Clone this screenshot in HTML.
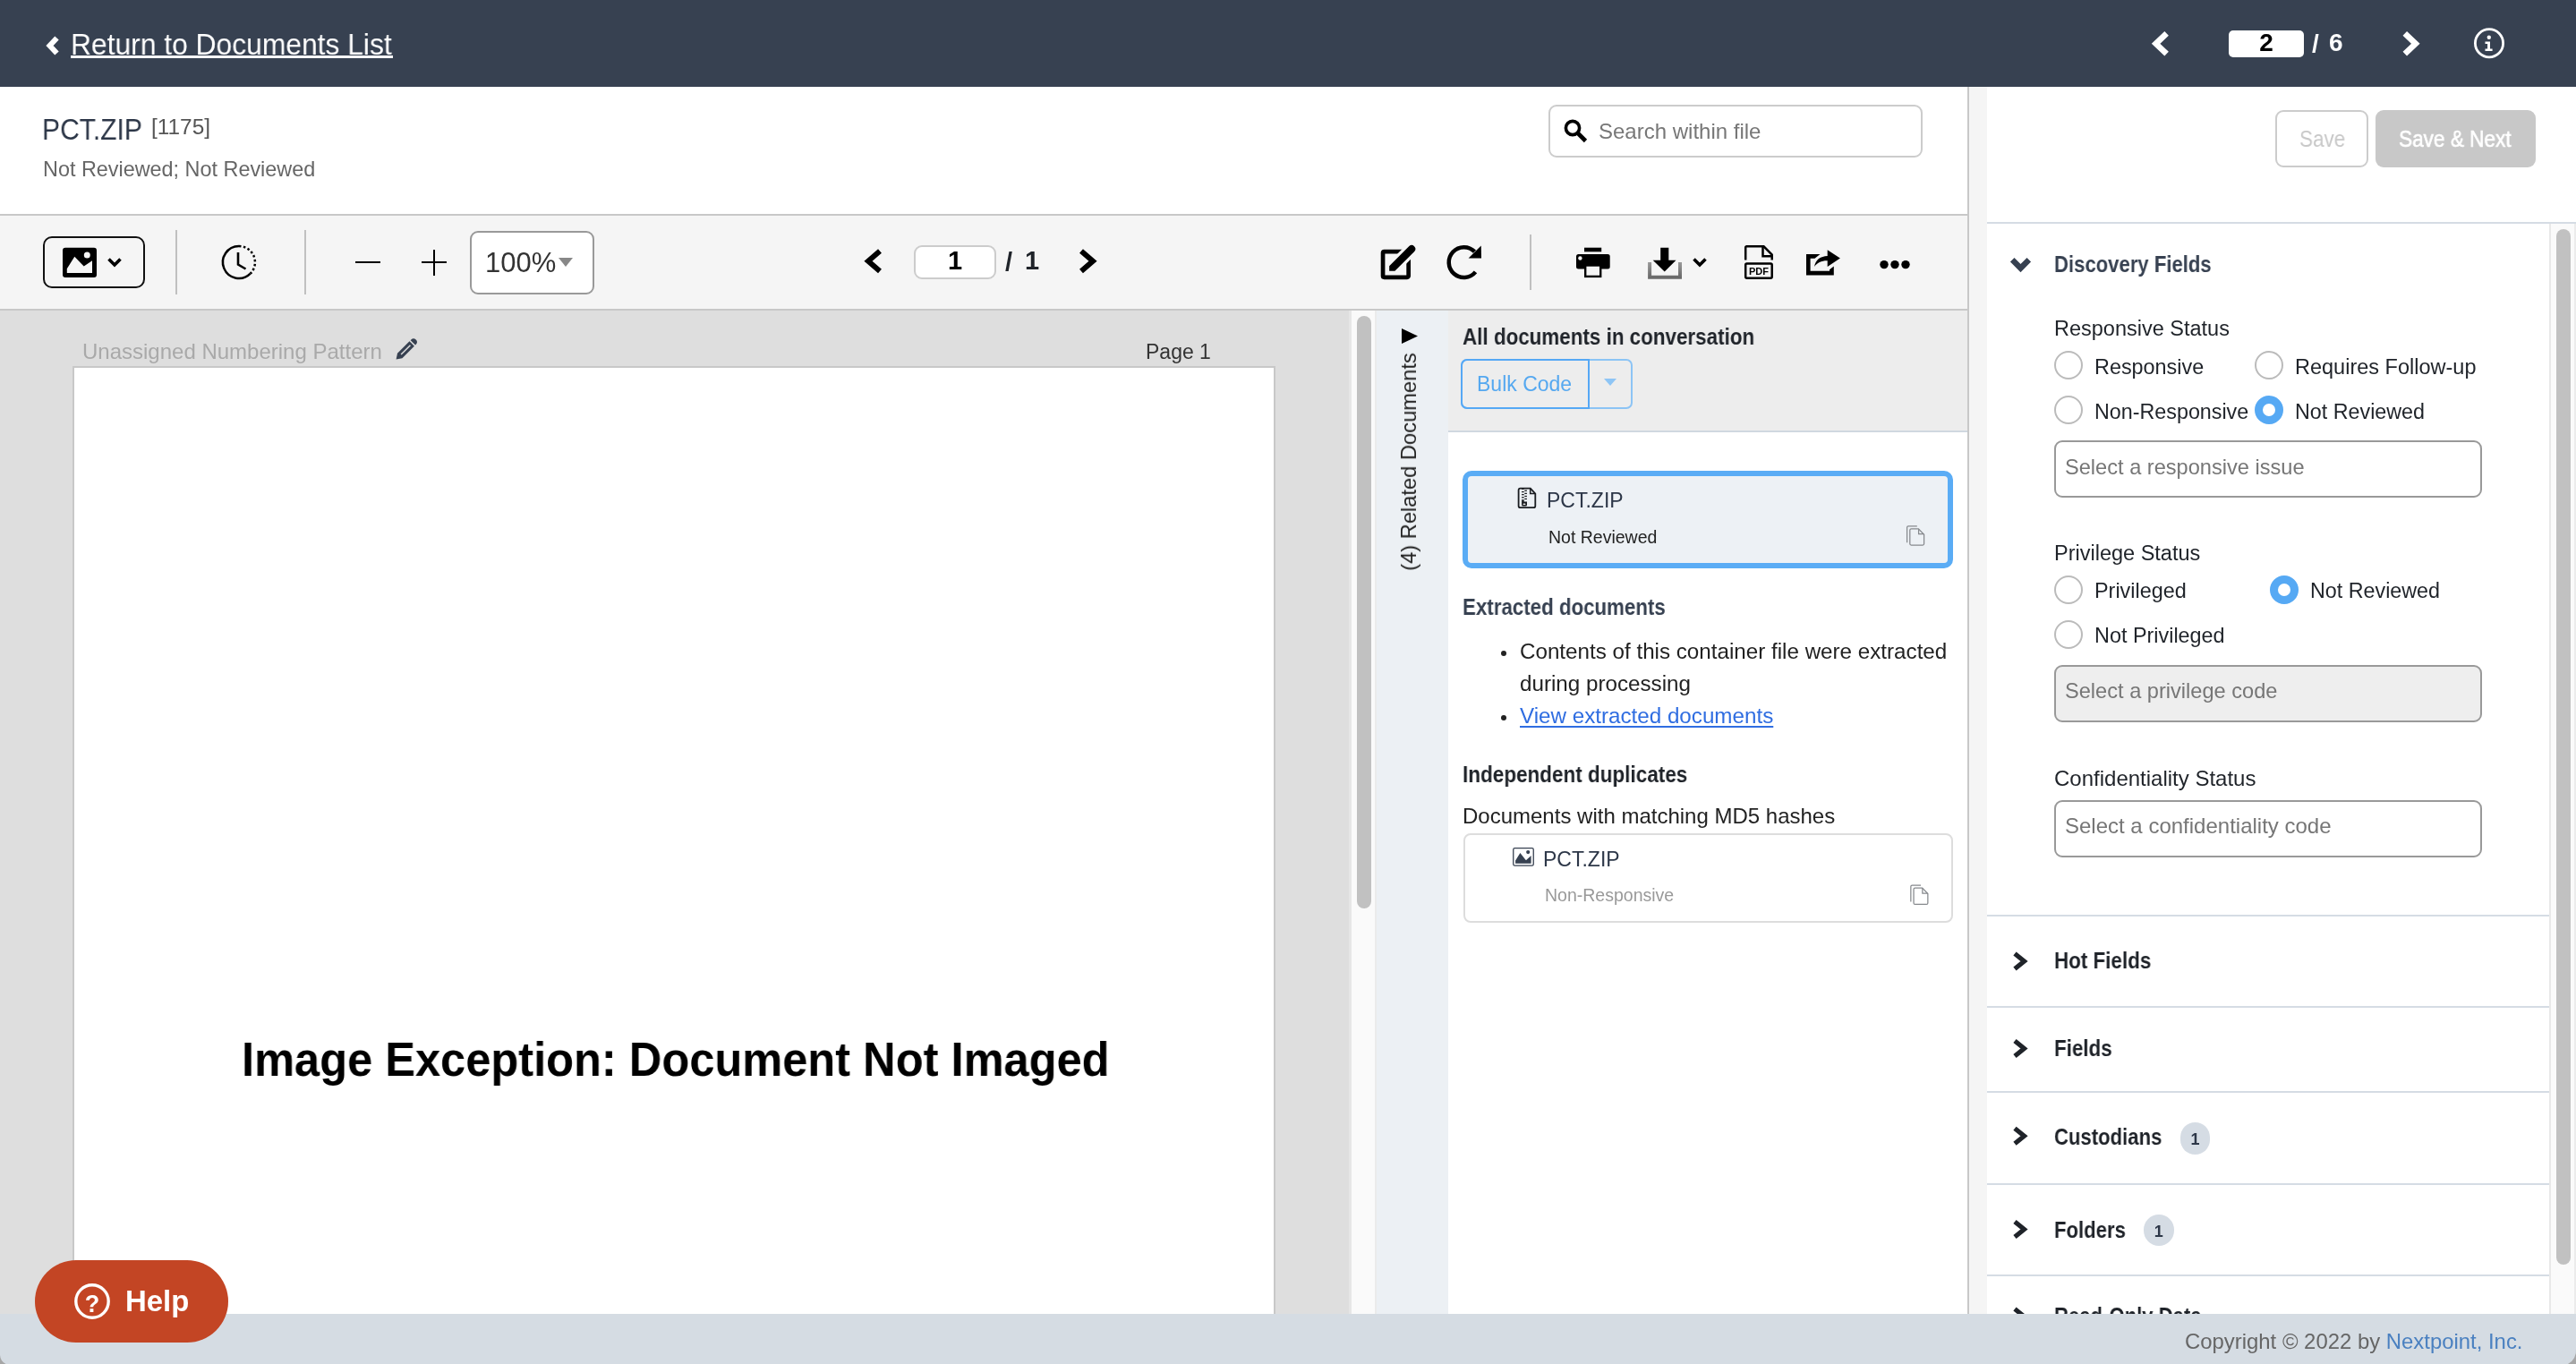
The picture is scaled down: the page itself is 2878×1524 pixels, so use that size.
<!DOCTYPE html>
<html><head><meta charset="utf-8">
<style>
*{margin:0;padding:0;box-sizing:border-box}
html,body{width:2878px;height:1524px;overflow:hidden;background:#fff;font-family:"Liberation Sans",sans-serif}
.a{position:absolute}
.t{position:absolute;line-height:1;margin-top:-0.847em;white-space:nowrap;will-change:transform}
.b{font-weight:bold}
svg{position:absolute;overflow:visible}
</style></head><body>

<!-- ===== top header ===== -->
<div class="a" style="left:0;top:0;width:2878px;height:97px;background:#374151"></div>
<svg style="left:0;top:0" width="1" height="1"><polyline points="63.5,42.5 55.5,51 63.5,59.5" fill="none" stroke="#fff" stroke-width="6"/></svg>
<div class="t" style="left:78.5px;top:60.5px;font-size:34px;color:#fff;transform:scaleX(0.935);transform-origin:0 0">Return to Documents List</div><div class="a" style="left:78.5px;top:61.6px;width:360px;height:3px;background:#fff"></div>
<svg style="left:0;top:0" width="1" height="1"><polyline points="2420.6,37.4 2408.6,48.8 2420.6,60.2" fill="none" stroke="#fff" stroke-width="6.6"/></svg>
<div class="a" style="left:2490px;top:34px;width:84px;height:30px;background:#fff;border-radius:5px"></div>
<div class="t b" style="left:2490px;width:84px;text-align:center;top:57.9px;font-size:28px;color:#000">2</div>
<div class="t b" style="left:2583px;top:58.5px;font-size:28px;color:#fff">/</div><div class="t b" style="left:2601.5px;top:57.9px;font-size:28px;color:#fff">6</div>
<svg style="left:0;top:0" width="1" height="1"><polyline points="2686.8,37.4 2698.8,48.8 2686.8,60.2" fill="none" stroke="#fff" stroke-width="6.6"/></svg>
<svg style="left:0;top:0" width="1" height="1"><circle cx="2781" cy="48.2" r="15.6" fill="none" stroke="#fff" stroke-width="2.8"/><circle cx="2780.8" cy="41.8" r="2.2" fill="#fff"/><path d="M2776.5 46.5h5.5v8h2.6v2.6h-8.1v-2.6h2.6v-5.4h-2.6z" fill="#fff"/></svg>

<!-- ===== doc title area ===== -->
<div class="t" style="left:47px;top:156.5px;font-size:33.2px;color:#2d3748;transform:scaleX(0.905);transform-origin:0 0">PCT.ZIP</div>
<div class="t" style="left:169px;top:150.5px;font-size:24.4px;color:#555">[1175]</div>
<div class="t" style="left:48px;top:198px;font-size:23.4px;color:#666">Not Reviewed; Not Reviewed</div>
<div class="a" style="left:1730px;top:117px;width:418px;height:59px;border:2px solid #ccc;border-radius:9px;background:#fff"></div>
<svg style="left:0;top:0" width="1" height="1"><circle cx="1757" cy="143" r="7.6" fill="none" stroke="#000" stroke-width="3.6"/><line x1="1762.5" y1="148.5" x2="1771.5" y2="157.5" stroke="#000" stroke-width="4.6"/></svg>
<div class="t" style="left:1786px;top:155px;font-size:24px;color:#777">Search within file</div>

<!-- divider between left and right panels -->
<div class="a" style="left:2198px;top:97px;width:2px;height:1371px;background:#c8c8c8"></div>
<div class="a" style="left:2200px;top:97px;width:20px;height:1371px;background:#f5f5f5"></div>

<!-- ===== toolbar ===== -->
<div class="a" style="left:0;top:239px;width:2198px;height:108px;background:#f5f5f5;border-top:2px solid #c8c8c8;border-bottom:2px solid #c8c8c8"></div>
<div class="a" style="left:48px;top:264px;width:114px;height:58px;border:2px solid #111;border-radius:10px"></div>
<svg style="left:0;top:0" width="1" height="1">
 <rect x="70" y="276.7" width="38" height="33.3" rx="3" fill="#000"/>
 <path d="M74.8 305V300.3L83.3 286.7L93.7 297.5L103 291.3V305Z" fill="#f5f5f5"/>
 <circle cx="97.3" cy="285" r="3.5" fill="#f5f5f5"/>
 <polyline points="121.5,289.5 128,296 134.5,289.5" fill="none" stroke="#000" stroke-width="3.6"/>
</svg>
<div class="a" style="left:196px;top:257px;width:2px;height:72px;background:#c0c0c0"></div>
<svg style="left:0;top:0" width="1" height="1">
 <path d="M267 275A18 18 0 1 0 279.7 305.7" fill="none" stroke="#000" stroke-width="2.5"/>
 <path d="M267 275A18 18 0 0 1 279.7 305.7" fill="none" stroke="#000" stroke-width="2.5" stroke-dasharray="2.5 2.5"/>
 <polyline points="266,282 266,295.5 274.5,300.5" fill="none" stroke="#000" stroke-width="2.6"/>
</svg>
<div class="a" style="left:340px;top:257px;width:2px;height:72px;background:#c0c0c0"></div>
<div class="a" style="left:397px;top:291.7px;width:28px;height:2.6px;background:#000"></div>
<div class="a" style="left:471px;top:291.7px;width:28px;height:2.6px;background:#000"></div>
<div class="a" style="left:483.7px;top:279px;width:2.6px;height:28.7px;background:#000"></div>
<div class="a" style="left:524.5px;top:257.5px;width:139px;height:71px;border:2px solid #999;border-radius:9px;background:#fff"></div>
<div class="t" style="left:542px;top:304px;font-size:31px;color:#333">100%</div>
<svg style="left:0;top:0" width="1" height="1"><path d="M624 288H640L632 298Z" fill="#888"/></svg>

<svg style="left:0;top:0" width="1" height="1"><polyline points="983,280.5 970,291.7 983,303" fill="none" stroke="#000" stroke-width="6"/></svg>
<div class="a" style="left:1021px;top:274px;width:92px;height:38px;border:2px solid #ccc;border-radius:9px;background:#fff"></div>
<div class="t b" style="left:1021px;width:92px;text-align:center;top:302px;font-size:29px;color:#000">1</div>
<div class="t b" style="left:1122.5px;top:303.5px;font-size:29px;color:#1f2329">/</div><div class="t b" style="left:1144.5px;top:302px;font-size:29px;color:#1f2329">1</div>
<svg style="left:0;top:0" width="1" height="1"><polyline points="1208,280.5 1221,291.7 1208,303" fill="none" stroke="#000" stroke-width="6"/></svg>

<!-- right toolbar icons -->
<svg style="left:0;top:0" width="1" height="1">
 <path d="M1568 281.05H1546.55a1.5 1.5 0 0 0-1.5 1.5V308.35a1.5 1.5 0 0 0 1.5 1.5H1572.15a1.5 1.5 0 0 0 1.5-1.5V287" fill="none" stroke="#000" stroke-width="4.7"/>
 <path d="M1552.15 302.8V297.3L1574.37 275.07A4.15 4.15 0 0 1 1580.23 280.93L1558.4 302.8Z" fill="#000" stroke="#f5f5f5" stroke-width="6.6" paint-order="stroke"/>
</svg>
<svg style="left:0;top:0" width="1" height="1">
 <path d="M1647.5 281.2A16.85 16.85 0 1 0 1648.5 303.9" fill="none" stroke="#000" stroke-width="4.5"/>
 <path d="M1654.75 274.5L1655 288.6H1640.6Z" fill="#000"/>
</svg>
<div class="a" style="left:1709px;top:262px;width:2px;height:62px;background:#c0c0c0"></div>
<svg style="left:0;top:0" width="1" height="1">
 <rect x="1770" y="276.7" width="19.2" height="4.6" fill="#000"/>
 <rect x="1761" y="284" width="37.7" height="16.6" rx="2.5" fill="#000"/>
 <circle cx="1765.4" cy="288.5" r="2.2" fill="#f5f5f5"/>
 <rect x="1771.2" y="296.5" width="17" height="12.4" fill="#f5f5f5" stroke="#000" stroke-width="2.4"/>
</svg>
<svg style="left:0;top:0" width="1" height="1">
 <defs><linearGradient id="tray" x1="0" y1="0" x2="0" y2="1"><stop offset="0" stop-color="#9a9a9a"/><stop offset="1" stop-color="#6a6a6a"/></linearGradient></defs>
 <path d="M1843.1 293V309.7H1877V293" fill="none" stroke="url(#tray)" stroke-width="4"/>
 <path d="M1855.2 276.7H1864.3V290.8H1872.5L1859.7 303.6L1846.7 290.8H1855.2Z" fill="#000"/>
 <polyline points="1892.5,289.5 1899,296 1905.5,289.5" fill="none" stroke="#000" stroke-width="3.6"/>
</svg>
<svg style="left:0;top:0" width="1" height="1">
 <path d="M1950.2 290.5V276.5a1.2 1.2 0 0 1 1.2-1.2H1970.5L1979.7 284.5V290.5" fill="none" stroke="#000" stroke-width="2.5"/>
 <path d="M1969.5 275.5V286.2H1979.7" fill="none" stroke="#000" stroke-width="2.5"/>
 <rect x="1950.2" y="294.6" width="29.5" height="16.1" rx="1.5" fill="none" stroke="#000" stroke-width="2.5"/>
 <text x="1965" y="306.8" text-anchor="middle" font-family="Liberation Sans" font-weight="bold" font-size="11" fill="#000">PDF</text>
</svg>
<svg style="left:0;top:0" width="1" height="1">
 <path d="M2033.5 284H2018V307.6H2048.8V297.5L2044 301.3V302.8H2022.6V288.8H2027.5Z" fill="#000"/>
 <path d="M2041.7 279.3L2055.9 288.4L2041.7 297.9V291.2C2035.5 291 2030 293.5 2027 298C2028.5 290 2034 286.3 2041.7 286Z" fill="#000"/>
</svg>
<svg style="left:0;top:0" width="1" height="1">
 <circle cx="2105" cy="295.6" r="4.7" fill="#000"/><circle cx="2117" cy="295.6" r="4.7" fill="#000"/><circle cx="2129" cy="295.6" r="4.7" fill="#000"/>
</svg>

<!-- ===== document viewer ===== -->
<div class="a" style="left:0;top:347px;width:1510px;height:1121px;background:#dedede"></div>
<div class="t" style="left:92px;top:401.3px;font-size:24px;color:#a9a9a9">Unassigned Numbering Pattern</div>
<svg style="left:0;top:0" width="1" height="1">
 <g transform="translate(442.6 401.6) rotate(-45)">
 <path d="M0 0L5.8 -3.8H24.9V3.8H5.8Z" fill="#374151"/>
 <path d="M7.8 -0.75H22.4V0.75H7.8Z" fill="#dedede"/>
 <path d="M26.5 -3.8H27.4A3.8 3.8 0 0 1 27.4 3.8H26.5Z" fill="#374151"/>
 </g>
</svg>
<div class="t" style="left:1280px;top:401.3px;font-size:23px;color:#333">Page 1</div>
<div class="a" style="left:81px;top:409px;width:1344px;height:1080px;background:#fff;border:2px solid #c8c8c8"></div>
<div class="t b" style="left:269.6px;top:1203.2px;font-size:52.8px;color:#000;transform:scaleX(0.958);transform-origin:0 0">Image Exception: Document Not Imaged</div>
<div class="a" style="left:1507px;top:347px;width:31px;height:1121px;background:#fafafa;border-left:3px solid #e6e6e6;border-right:2px solid #ebebeb"></div>
<div class="a" style="left:1516px;top:353px;width:16px;height:661.5px;background:#c1c1c1;border-radius:8px"></div>

<!-- related docs tab -->
<div class="a" style="left:1538px;top:347px;width:80px;height:1121px;background:#ecf0f4"></div>
<svg style="left:0;top:0" width="1" height="1"><path d="M1566 367V384L1584 375.5Z" fill="#000"/></svg>
<div class="a" style="left:1573.5px;top:515.6px;width:0;height:0">
 <div class="t" style="left:0;top:0;font-size:23.7px;color:#222;transform:translate(-50%,0) rotate(-90deg);margin-top:0;line-height:24px;height:24px;margin-top:-12px">(4) Related Documents</div>
</div>

<!-- related panel -->
<div class="a" style="left:1618px;top:347px;width:580px;height:136px;background:#ededed;border-bottom:2px solid #d0d8e0"></div>
<div class="t b" style="left:1634px;top:385.5px;font-size:25.0px;color:#1f2329;transform:scaleX(0.896);transform-origin:0 0">All documents in conversation</div>
<div class="a" style="left:1632px;top:401px;width:191.5px;height:55.5px;border:2px solid #8cc4f5;border-radius:7px"></div>
<div class="a" style="left:1632px;top:401px;width:144.3px;height:55.5px;border:2px solid #55a8f5;border-radius:7px 0 0 7px"></div>
<div class="t" style="left:1650px;top:437px;font-size:23px;color:#55a8f0">Bulk Code</div>
<svg style="left:0;top:0" width="1" height="1"><path d="M1792 423H1806L1799 431Z" fill="#8ec5f5"/></svg>

<div class="a" style="left:1634px;top:525.5px;width:548px;height:109px;border:6px solid #5aacf5;border-radius:10px;background:#edf1f5"></div>
<svg style="left:0;top:0" width="1" height="1">
 <path d="M1698.6 545.6H1709.8L1715.3 551.6V565.2a2 2 0 0 1-2 2H1698.6a2 2 0 0 1-2-2V547.6a2 2 0 0 1 2-2Z" fill="none" stroke="#1a1d21" stroke-width="1.8"/>
 <path d="M1709.7 546V551.4H1715" fill="none" stroke="#1a1d21" stroke-width="1.5"/>
 <g fill="#1a1d21"><rect x="1700.1" y="545.6" width="2.6" height="1.3"/><rect x="1700.1" y="548.9" width="2.6" height="1.3"/><rect x="1700.1" y="552" width="2.6" height="1.3"/><rect x="1700.1" y="555.1" width="2.6" height="1.3"/><rect x="1700.1" y="558.2" width="2.6" height="1.3"/>
 <rect x="1703.3" y="547.6" width="2.6" height="1.3"/><rect x="1703.3" y="550.7" width="2.6" height="1.3"/><rect x="1703.3" y="553.8" width="2.6" height="1.3"/><rect x="1703.3" y="556.8" width="2.6" height="1.3"/></g>
 <path d="M1700.1 559.2h2.6v1.4h3.3v3.6a1.4 1.4 0 0 1-1.4 1.4h-3.1a1.4 1.4 0 0 1-1.4-1.4Z" fill="#1a1d21"/>
 <ellipse cx="1703" cy="563.2" rx="1.6" ry="0.8" fill="#fff"/>
</svg>
<div class="t" style="left:1728px;top:567px;font-size:23px;color:#2d3748">PCT.ZIP</div>
<div class="t" style="left:1730px;top:608px;font-size:19.5px;color:#222">Not Reviewed</div>
<svg style="left:0;top:0" width="1" height="1">
 <g transform="translate(0 0)" fill="none" stroke="#86898d" stroke-width="1.25">
 <path d="M2135.3 590.8H2143.4L2149.6 597.2V607.6a1.5 1.5 0 0 1-1.5 1.5H2135.3a1.5 1.5 0 0 1-1.5-1.5V592.3a1.5 1.5 0 0 1 1.5-1.5Z"/>
 <path d="M2143.6 591V596.7H2149.4"/>
 <path d="M2130.6 606.3V589.3a1.5 1.5 0 0 1 1.5-1.5H2141.8"/>
 </g>
</svg>

<div class="t b" style="left:1634px;top:687px;font-size:25.0px;color:#374151;transform:scaleX(0.892);transform-origin:0 0">Extracted documents</div>
<div class="a" style="left:1677px;top:726.5px;width:6px;height:6px;border-radius:50%;background:#222"></div>
<div class="t" style="left:1698px;top:736.4px;font-size:24.2px;color:#222">Contents of this container file were extracted</div>
<div class="t" style="left:1698px;top:772.2px;font-size:24.2px;color:#222">during processing</div>
<div class="a" style="left:1677px;top:798.5px;width:6px;height:6px;border-radius:50%;background:#222"></div>
<div class="t" style="left:1698px;top:808px;font-size:24.2px;color:#2f6de1;text-decoration:underline;text-decoration-thickness:2px;text-underline-offset:3px">View extracted documents</div>
<div class="t b" style="left:1634px;top:874.6px;font-size:25.0px;color:#1f2329;transform:scaleX(0.900);transform-origin:0 0">Independent duplicates</div>
<div class="t" style="left:1634px;top:920px;font-size:24px;color:#222">Documents with matching MD5 hashes</div>
<div class="a" style="left:1634.5px;top:931px;width:547px;height:100px;border:2px solid #ddd;border-radius:8px;background:#fff"></div>
<svg style="left:0;top:0" width="1" height="1">
 <rect x="1690.75" y="947.65" width="22.5" height="19.5" rx="1.6" fill="none" stroke="#374151" stroke-width="1.3"/>
 <path d="M1693.1 964.8V961.6L1698.4 953.1L1704.3 960.6Q1704.8 961.2 1705.4 960.7L1710.6 956.1V964.8Z" fill="#374151"/>
 <circle cx="1707.2" cy="952.1" r="2.1" fill="#374151"/>
</svg>
<div class="t" style="left:1724px;top:968px;font-size:23px;color:#2d3748">PCT.ZIP</div>
<div class="t" style="left:1726px;top:1007.5px;font-size:19.5px;color:#999">Non-Responsive</div>
<svg style="left:0;top:0" width="1" height="1">
 <g transform="translate(4.25 401.3)" fill="none" stroke="#86898d" stroke-width="1.25">
 <path d="M2135.3 590.8H2143.4L2149.6 597.2V607.6a1.5 1.5 0 0 1-1.5 1.5H2135.3a1.5 1.5 0 0 1-1.5-1.5V592.3a1.5 1.5 0 0 1 1.5-1.5Z"/>
 <path d="M2143.6 591V596.7H2149.4"/>
 <path d="M2130.6 606.3V589.3a1.5 1.5 0 0 1 1.5-1.5H2141.8"/>
 </g>
</svg>

<!-- ===== right coding panel ===== -->
<div class="a" style="left:2542px;top:123px;width:104px;height:63.5px;border:2px solid #ccc;border-radius:9px;background:#fff"></div>
<div class="t" style="left:2568.5px;top:163.8px;font-size:25px;color:#c8c8c8;transform:scaleX(0.9);transform-origin:0 0">Save</div>
<div class="a" style="left:2654px;top:123px;width:179px;height:63.5px;border-radius:9px;background:#c8c8c8"></div>
<div class="t" style="left:2679.5px;top:163.8px;font-size:25px;color:#fff;-webkit-text-stroke:0.6px #fff;transform:scaleX(0.904);transform-origin:0 0">Save &amp; Next</div>
<div class="a" style="left:2220px;top:248px;width:658px;height:2px;background:#d5dce4"></div>
<div class="a" style="left:2848px;top:250px;width:30px;height:1218px;background:#fafafa;border-left:2px solid #e8e8e8;border-right:2px solid #ebebeb"></div>
<div class="a" style="left:2856px;top:256px;width:16px;height:1157px;background:#c1c1c1;border-radius:8px"></div>

<svg style="left:0;top:0" width="1" height="1"><polyline points="2248.2,290.3 2257.5,299.6 2266.8,290.3" fill="none" stroke="#374151" stroke-width="6.4"/></svg>
<div class="t b" style="left:2295px;top:304.3px;font-size:25.0px;color:#374151;transform:scaleX(0.884);transform-origin:0 0">Discovery Fields</div>

<div class="t" style="left:2295px;top:376px;font-size:23.5px;color:#1f2329">Responsive Status</div>
<div class="a" style="left:2295px;top:392px;width:32px;height:32px;border:2px solid #bbb;border-radius:50%"></div>
<div class="t" style="left:2340px;top:419.3px;font-size:23.4px;color:#1f2329">Responsive</div>
<div class="a" style="left:2519px;top:392px;width:32px;height:32px;border:2px solid #bbb;border-radius:50%"></div>
<div class="t" style="left:2564px;top:419.3px;font-size:23.5px;color:#1f2329">Requires Follow-up</div>
<div class="a" style="left:2295px;top:442px;width:32px;height:32px;border:2px solid #bbb;border-radius:50%"></div>
<div class="t" style="left:2340px;top:468.3px;font-size:23.3px;color:#1f2329">Non-Responsive</div>
<div class="a" style="left:2519px;top:442px;width:32px;height:32px;border:9px solid #56a9f4;border-radius:50%;background:#fff"></div>
<div class="t" style="left:2564px;top:468.3px;font-size:23.3px;color:#1f2329">Not Reviewed</div>
<div class="a" style="left:2295px;top:492px;width:478px;height:64px;border:2px solid #999;border-radius:9px;background:#fff"></div>
<div class="t" style="left:2307px;top:531px;font-size:23.6px;color:#767676">Select a responsive issue</div>

<div class="t" style="left:2295px;top:627.3px;font-size:23.5px;color:#1f2329">Privilege Status</div>
<div class="a" style="left:2295px;top:643.3px;width:32px;height:32px;border:2px solid #bbb;border-radius:50%"></div>
<div class="t" style="left:2340px;top:669.3px;font-size:23.4px;color:#1f2329">Privileged</div>
<div class="a" style="left:2535.8px;top:643.3px;width:32px;height:32px;border:9px solid #56a9f4;border-radius:50%;background:#fff"></div>
<div class="t" style="left:2581px;top:669px;font-size:23.3px;color:#1f2329">Not Reviewed</div>
<div class="a" style="left:2295px;top:693.3px;width:32px;height:32px;border:2px solid #bbb;border-radius:50%"></div>
<div class="t" style="left:2340px;top:719.3px;font-size:23.4px;color:#1f2329">Not Privileged</div>
<div class="a" style="left:2295px;top:743px;width:478px;height:64px;border:2px solid #999;border-radius:9px;background:#eee"></div>
<div class="t" style="left:2307px;top:781.3px;font-size:23.6px;color:#767676">Select a privilege code</div>

<div class="t" style="left:2295px;top:878.3px;font-size:24px;color:#1f2329">Confidentiality Status</div>
<div class="a" style="left:2295px;top:894px;width:478px;height:64px;border:2px solid #999;border-radius:9px;background:#fff"></div>
<div class="t" style="left:2307px;top:931.3px;font-size:24px;color:#767676">Select a confidentiality code</div>

<div class="a" style="left:2220px;top:1022px;width:628px;height:2px;background:#d5dce4"></div>
<div class="a" style="left:2220px;top:1124px;width:628px;height:2px;background:#d5dce4"></div>
<div class="a" style="left:2220px;top:1219px;width:628px;height:2px;background:#d5dce4"></div>
<div class="a" style="left:2220px;top:1322px;width:628px;height:2px;background:#d5dce4"></div>
<div class="a" style="left:2220px;top:1424px;width:628px;height:2px;background:#d5dce4"></div>

<svg style="left:0;top:0" width="1" height="1" fill="none" stroke="#1f2329" stroke-width="5.2">
 <polyline points="2251,1065.5 2261.5,1074 2251,1082.5"/>
 <polyline points="2251,1163 2261.5,1171.5 2251,1180"/>
 <polyline points="2251,1260.8 2261.5,1269.3 2251,1277.8"/>
 <polyline points="2251,1365 2261.5,1373.5 2251,1382"/>
 <polyline points="2251,1462.4 2261.5,1470.9 2251,1479.4"/>
</svg>
<div class="t b" style="left:2295px;top:1082.6px;font-size:25.0px;color:#1f2329;transform:scaleX(0.896);transform-origin:0 0">Hot Fields</div>
<div class="t b" style="left:2295px;top:1180.3px;font-size:25.0px;color:#1f2329;transform:scaleX(0.896);transform-origin:0 0">Fields</div>
<div class="t b" style="left:2295px;top:1279.3px;font-size:25.0px;color:#1f2329;transform:scaleX(0.884);transform-origin:0 0">Custodians</div>
<div class="a" style="left:2436px;top:1253.5px;width:33px;height:36.5px;border-radius:18px;background:#d5dce4"></div>
<div class="t b" style="left:2436px;width:33px;text-align:center;top:1279px;font-size:18px;color:#2d3748">1</div>
<div class="t b" style="left:2295px;top:1383px;font-size:25.0px;color:#1f2329;transform:scaleX(0.884);transform-origin:0 0">Folders</div>
<div class="a" style="left:2395px;top:1356.5px;width:33.6px;height:35.5px;border-radius:18px;background:#d5dce4"></div>
<div class="t b" style="left:2395px;width:33.6px;text-align:center;top:1382px;font-size:18px;color:#2d3748">1</div>
<div class="t b" style="left:2295px;top:1479px;font-size:25.0px;color:#1f2329;transform:scaleX(0.884);transform-origin:0 0">Read-Only Data</div>

<!-- ===== footer ===== -->
<div class="a" style="left:0;top:1468px;width:2878px;height:56px;background:#d5dce3"></div>
<div class="t" style="left:2441px;top:1507.3px;font-size:23.9px;color:#666">Copyright © 2022 by <span style="color:#4a80c0">Nextpoint, Inc.</span></div>

<svg style="left:0;top:0" width="1" height="1">
 <path d="M0 1514V1524H6.5A12 12 0 0 1 0 1514Z" fill="#a6a6a6"/>
 <path d="M2878 1507V1524H2869A17 17 0 0 0 2878 1507Z" fill="#a6a6a6"/>
</svg>
<!-- help button -->
<div class="a" style="left:39px;top:1408px;width:216px;height:91.5px;border-radius:46px;background:#c34524"></div>
<svg style="left:0;top:0" width="1" height="1">
 <circle cx="103" cy="1454" r="18.2" fill="none" stroke="#fff" stroke-width="3.4"/>
 <text x="103" y="1466.2" text-anchor="middle" font-family="Liberation Sans" font-weight="bold" font-size="27" fill="#fff">?</text>
</svg>
<div class="t b" style="left:139.5px;top:1466.3px;font-size:32.9px;color:#fff">Help</div>

</body></html>
